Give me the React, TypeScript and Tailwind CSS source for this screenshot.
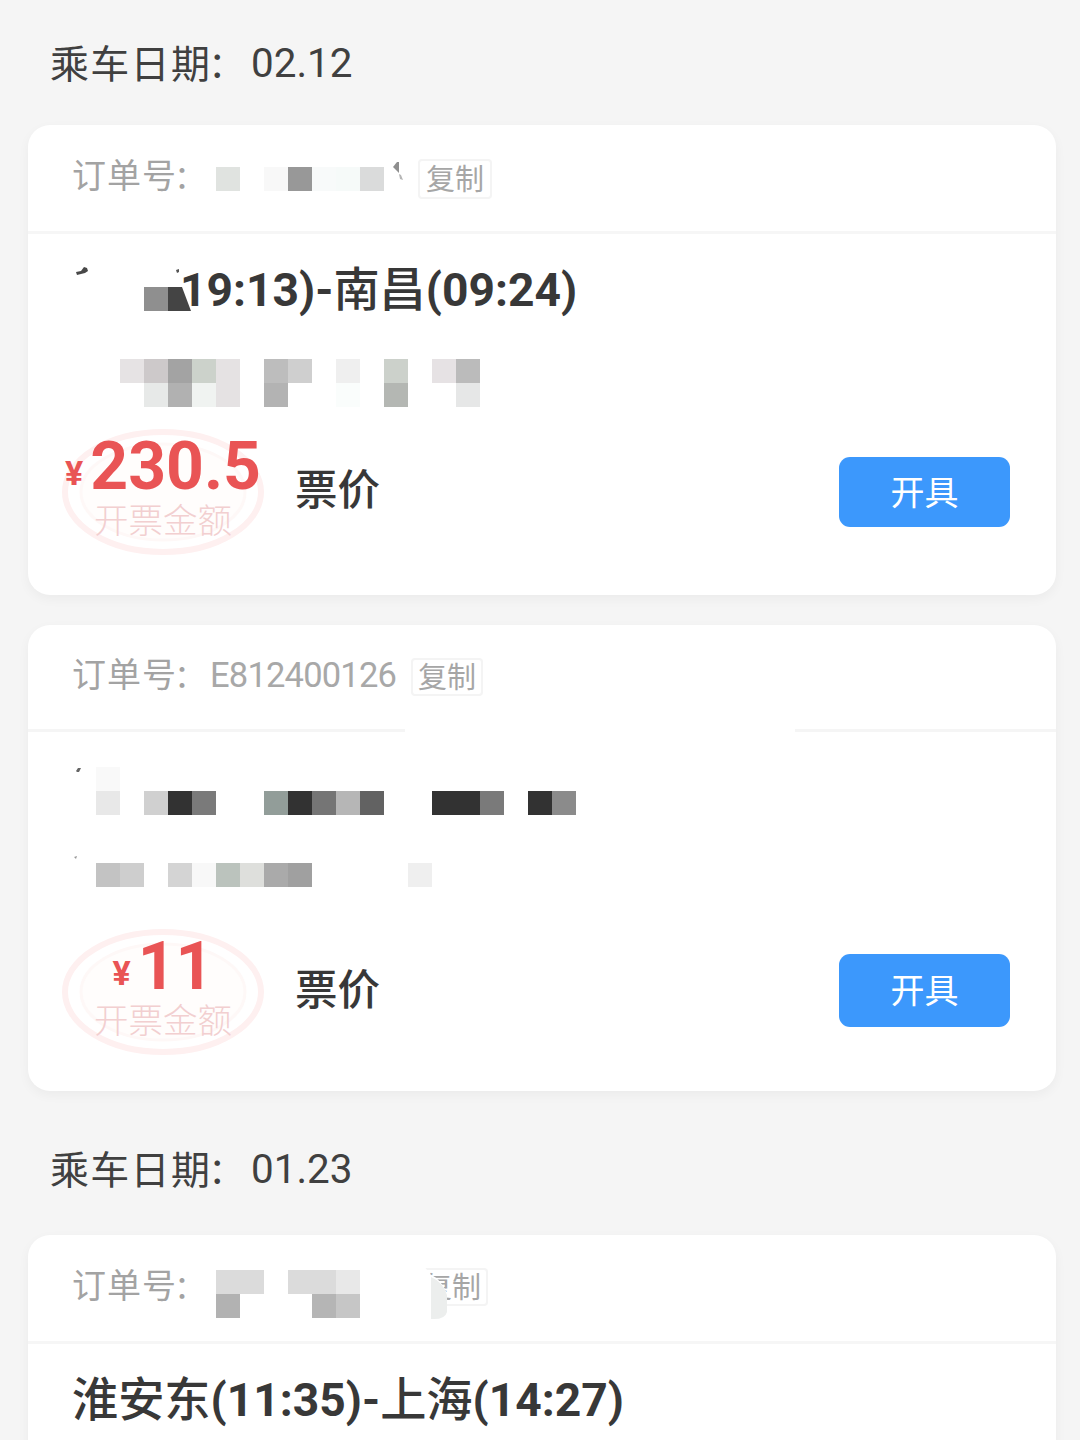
import type { ReactNode } from 'react';

// [column, row, colour] on a 24px grid
type Cell = [number, number, string];

interface MosaicProps {
  cells: Cell[];
  cols: number;
  rows?: number;
  className?: string;
}

function Mosaic({ cells, cols, rows = 1, className = '' }: MosaicProps) {
  return (
    <svg
      className={`shrink-0 ${className}`}
      width={cols * 24}
      height={rows * 24}
      viewBox={`0 0 ${cols * 24} ${rows * 24}`}
      shapeRendering="crispEdges"
    >
      {cells.map(([x, y, fill], i) => (
        <rect key={i} x={x * 24} y={y * 24} width={24} height={24} fill={fill} />
      ))}
    </svg>
  );
}

const ORDER_A: Cell[] = [
  [0, 0, '#e0e3e0'], [2, 0, '#f8f8f8'], [3, 0, '#989898'],
  [4, 0, '#f8fafa'], [5, 0, '#f6faf9'], [6, 0, '#dadbdb'],
];

const SEAT_A: Cell[] = [
  [0, 0, '#e6e3e4'], [1, 0, '#cdc9ca'], [2, 0, '#a3a3a3'], [3, 0, '#ccd2cb'], [4, 0, '#e5e2e3'],
  [6, 0, '#bdbdbd'], [7, 0, '#cfcfcf'], [9, 0, '#efefef'], [11, 0, '#ccd1cb'], [13, 0, '#e6e2e4'], [14, 0, '#bbbbbb'],
  [1, 1, '#e7e9e8'], [2, 1, '#b1b1b1'], [3, 1, '#f0f3f1'], [4, 1, '#e5e2e3'],
  [6, 1, '#b3b3b3'], [9, 1, '#fafdfc'], [11, 1, '#b4b7b3'], [14, 1, '#e6e7e7'],
];

const ROUTE_B: Cell[] = [
  [0, 0, '#f9f9f9'], [0, 1, '#e8e8e8'], [2, 1, '#d0d0d0'], [3, 1, '#323232'], [4, 1, '#7a7a7a'],
  [7, 1, '#929d99'], [8, 1, '#323232'], [9, 1, '#757575'], [10, 1, '#b6b6b6'], [11, 1, '#626262'],
  [14, 1, '#323232'], [15, 1, '#323232'], [16, 1, '#7a7a7a'], [18, 1, '#323232'], [19, 1, '#8b8b8b'],
];

const SEAT_B: Cell[] = [
  [0, 0, '#c3c3c3'], [1, 0, '#cecece'], [3, 0, '#d4d4d4'], [4, 0, '#f8f8f8'], [5, 0, '#bbc3bd'],
  [6, 0, '#dedfdc'], [7, 0, '#aaaaaa'], [8, 0, '#a0a0a0'], [13, 0, '#efefef'],
];

const ORDER_C: Cell[] = [
  [0, 0, '#dbdbdb'], [1, 0, '#dbdbdb'], [3, 0, '#dbdbdb'], [4, 0, '#dbdbdb'], [5, 0, '#e8e8e8'],
  [0, 1, '#b2b2b2'], [4, 1, '#b5b5b5'], [5, 1, '#c6c6c6'],
];

function DateHeading({ date }: { date: string }) {
  return (
    <h2 className="flex h-[60px] items-center pl-[50px] leading-none font-normal text-[#404040]">
      <span className="mt-[3px] w-[201px] text-[39px] tracking-[1.3px] whitespace-nowrap">
        乘车日期<span className="-ml-[3px] text-[36px]">：</span>
      </span>
      <span className="mt-px text-[40.4px]">{date}</span>
    </h2>
  );
}

function Card({ className = '', children }: { className?: string; children: ReactNode }) {
  return (
    <section className={`mx-auto w-[1028px] shrink-0 rounded-[22px] bg-white shadow-[0_4px_12px_rgba(0,0,0,0.045)] ${className}`}>
      {children}
    </section>
  );
}

function CopyButton({ className = '', children }: { className?: string; children?: ReactNode }) {
  return (
    <button className={`relative flex shrink-0 items-center justify-center rounded-[4px] border-2 border-[#f4f4f4] pt-[3px] text-[29px] leading-none text-[#a6a6a6] ${className}`}>
      复制
      {children}
    </button>
  );
}

function OrderLabel() {
  return (
    <span className="-mt-[4px] w-[138px] shrink-0 text-[34px] leading-none tracking-[1px] whitespace-nowrap text-[#a3a3a3]">
      订单号<span className="-ml-[3px] text-[32px]">：</span>
    </span>
  );
}

function FareRow({ amount, className = '', buttonClass = '' }: { amount: string; className?: string; buttonClass?: string }) {
  return (
    <div className={`flex h-[130px] items-center pl-[33px] pr-[46px] ${className}`}>
      <div className="relative h-[130px] w-[204px] shrink-0">
        <svg className="absolute inset-0" width="204" height="130" viewBox="0 0 204 130" fill="none">
          <ellipse cx="102" cy="65" rx="98" ry="60" stroke="#fef0f0" strokeWidth="6" />
          <ellipse cx="102" cy="65" rx="82" ry="48" fill="#fffdfc" stroke="#fef8f7" strokeWidth="3" />
        </svg>
        <div className="relative flex flex-col items-center pt-[4px]">
          <p className="flex h-[72px] items-baseline justify-center leading-[72px] font-bold whitespace-nowrap text-[#e95455]">
            <span className="relative -top-[4px] mr-[7px] text-[34px]">¥</span>
            <span className="text-[66px]">{amount}</span>
          </p>
          <p className="text-[34.5px] leading-[36px] font-light text-[#f2cfd0]">开票金额</p>
        </div>
      </div>
      <span className="-mt-px ml-[30px] text-[42.5px] leading-none font-medium text-[#383838]">票价</span>
      <button className={`ml-auto w-[171px] rounded-[11px] bg-[#3c98fc] pt-px text-[34px] leading-none text-white ${buttonClass}`}>开具</button>
    </div>
  );
}

export default function App() {
  return (
    <div className="flex h-[1440px] w-[1080px] flex-col overflow-hidden bg-[#f5f5f5] pl-1 font-['Roboto','Noto_Sans_CJK_SC',sans-serif]">
      <div className="-ml-1 pt-[34px] pb-[31px]">
        <DateHeading date="02.12" />
      </div>

      <Card className="h-[470px]">
        <header className="flex h-[109px] items-center border-b-3 border-[#f6f6f6] pl-[44px]">
          <OrderLabel />
          <Mosaic cells={ORDER_A} cols={7} className="mt-px ml-[6px]" />
          <svg className="-mt-[12px] ml-[8px]" width="14" height="22" viewBox="0 0 14 22">
            <path d="M1 6 L5 1 L7 1 L7 12 Z" fill="#8f8f8f" />
            <path d="M7 13 L9 14 L11 19 L8 18 Z" fill="#b5b5b5" />
          </svg>
          <CopyButton className="mt-px ml-[12px] h-[40px] w-[74px]" />
        </header>
        <div className="flex h-[112px] items-center pl-[44px]">
          <svg className="shrink-0" width="120" height="56" viewBox="0 0 120 56">
            <path d="M4 10 L9 9 L12 5 L15 6 L16 9 L13 11 L9 12 L5 13 Z" fill="#484848" />
            <path d="M104 8 L107 7 L107 10 L105 11 Z" fill="#555" />
            <path d="M72 25 H96 V49 H72 Z" fill="#8f8f8f" />
            <path d="M96 25 H110 L119 49 H96 Z" fill="#444" />
          </svg>
          <h3 className="-ml-[12px] flex text-[46.2px] leading-none font-bold whitespace-nowrap text-[#383838]">
            19:13)-<span className="font-medium">南昌</span>(09:24)
          </h3>
        </div>
        <Mosaic cells={SEAT_A} cols={15} rows={2} className="mt-[13px] ml-[92px]" />
        <FareRow amount="230.5" className="mt-[20px]" buttonClass="h-[70px]" />
      </Card>

      <Card className="mt-[30px] h-[466px]">
        <header className="flex h-[104px] items-center pl-[44px]">
          <OrderLabel />
          <span className="-mt-[4px] text-[34.5px] leading-none tracking-[-0.8px] text-[#a8a8a8]">E812400126</span>
          <CopyButton className="ml-[15px] h-[38px] w-[72px]" />
        </header>
        <div className="flex justify-between">
          <span className="h-[3px] w-[377px] bg-[#f5f5f5]" />
          <span className="h-[3px] w-[261px] bg-[#f5f5f5]" />
        </div>
        <div className="flex items-start pt-[35px] pl-[44px]">
          <svg className="shrink-0" width="24" height="20" viewBox="0 0 24 20">
            <path d="M4 4 L6 1 L9 1 L7 5 L5 5 Z" fill="#666" />
          </svg>
          <Mosaic cells={ROUTE_B} cols={20} rows={2} />
        </div>
        <div className="flex items-start pt-[41px] pl-[44px]">
          <svg className="shrink-0" width="24" height="24" viewBox="0 0 24 24">
            <path d="M2 1 L5 0 L4 3 Z" fill="#999" />
          </svg>
          <Mosaic cells={SEAT_B} cols={14} className="mt-[7px]" />
        </div>
        <FareRow amount="11" className="mt-[40px]" buttonClass="h-[73px] -mt-[4px]" />
      </Card>

      <div className="-ml-1 pt-[49px] pb-[35px]">
        <DateHeading date="01.23" />
      </div>

      <Card className="h-[300px]">
        <header className="flex h-[109px] items-center border-b-3 border-[#f6f6f6] pl-[44px]">
          <OrderLabel />
          <Mosaic cells={ORDER_C} cols={6} rows={2} className="mt-[12px] ml-[6px]" />
          <CopyButton className="-mt-[2px] ml-[56px] h-[38px] w-[72px]">
            <svg className="absolute -top-[4px] -left-[4px]" width="42" height="58" viewBox="0 0 42 58">
              <path d="M0 0 H10 L16 8 Q28 14 33 28 V44 H0 Z" fill="#fff" />
              <path d="M17 11 Q29 16 33 29 V46 Q31 54 17 53 Z" fill="#eceeed" />
            </svg>
          </CopyButton>
        </header>
        <h3 className="flex h-[112px] items-center pl-[44px] text-[46.2px] leading-none font-bold whitespace-nowrap text-[#383838]">
          <span className="font-medium">淮安东</span>(11:35)-<span className="font-medium">上海</span>(14:27)
        </h3>
      </Card>
    </div>
  );
}
